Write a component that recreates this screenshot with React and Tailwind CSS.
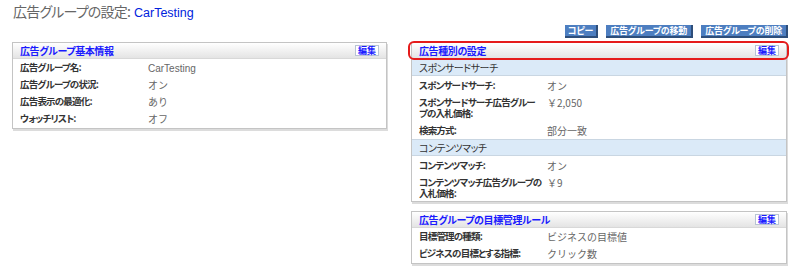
const jp = "font-['Noto_Sans_CJK_JP','Liberation_Sans',sans-serif] [font-feature-settings:'palt']";

function EditBtn() {
  return (
    <span className="inline-flex items-center justify-center h-[11px] px-[2px] bg-white border border-[#b8c4d4] text-[9px] leading-[9px] font-bold text-[#1a1aff]">
      編集
    </span>
  );
}

function Header({ title }) {
  return (
    <div className="flex items-center justify-between h-[16px] pl-[7px] pr-[7px] bg-gradient-to-b from-white to-[#e4e4e4] border-b border-[#d8d8d8]">
      <span className="text-[10px] leading-[12px] font-bold text-[#1a1aff] tracking-[-0.4px]">{title}</span>
      <EditBtn />
    </div>
  );
}

function Row({ label, value, h = "h-[17px]" }) {
  return (
    <div className={"flex pt-[3px] text-[10px] leading-[11px] overflow-visible " + h}>
      <div className="w-[135px] shrink-0 pl-[7px] font-bold text-[#333] whitespace-nowrap text-[9.5px] tracking-[-0.8px]">{label}</div>
      <div className="text-[#666] whitespace-nowrap [font-feature-settings:normal]">{value}</div>
    </div>
  );
}

function Sub({ title }) {
  return (
    <div className="h-[17px] flex items-center pl-[7px] bg-[#dbeaf8] border-y border-[#c9d6e2] text-[10px] text-[#333] tracking-[-0.5px]">
      {title}
    </div>
  );
}

function Panel({ children, className = "" }) {
  return (
    <div className={"relative bg-white border border-[#c4c4c4] shadow-[1px_2px_0_#dcdcdc] " + className}>
      {children}
    </div>
  );
}

function Btn({ children, px = "px-[4px]" }) {
  return (
    <span className={"inline-flex items-center h-[13px] bg-[#4d7ec0] border-r-2 border-b-2 border-[#2e4e7a] text-white text-[9px] leading-[9px] font-bold tracking-[-0.2px] " + px}>
      {children}
    </span>
  );
}

export default function App() {
  return (
    <div className={"w-[800px] h-[268px] bg-white overflow-hidden " + jp}>
      <div className="h-[25px] pl-[13px] pt-[2px] flex items-baseline">
        <span className="text-[14px] leading-[18px] text-[#666] tracking-[-0.8px]">広告グループの設定:</span>
        <span className="ml-[4px] text-[12.5px] text-[#0022dd] font-['Liberation_Sans',sans-serif]">CarTesting</span>
      </div>
      <div className="flex">
        <div className="ml-[12px] w-[375px] pt-[17px]">
          <Panel>
            <Header title="広告グループ基本情報" />
            <div className="pb-[1px]">
              <Row label="広告グループ名:" value={<span className="font-['Liberation_Sans',sans-serif]">CarTesting</span>} />
              <Row label="広告グループの状況:" value="オン" />
              <Row label="広告表示の最適化:" value="あり" />
              <Row label="ウォッチリスト:" value="オフ" />
            </div>
          </Panel>
        </div>
        <div className="ml-[24px] w-[376px]">
          <div className="flex justify-end gap-[8px] mr-[-1px]">
            <Btn px="px-[3px]">コピー</Btn>
            <Btn>広告グループの移動</Btn>
            <Btn>広告グループの削除</Btn>
          </div>
          <Panel className="mt-[4px]">
            <Header title="広告種別の設定" />
            <div className="absolute left-[-4px] right-[-3px] top-[-2px] h-[19px] border-2 border-[#e51b1b] rounded-[6px] pointer-events-none" />
            <Sub title="スポンサードサーチ" />
            <div className="pt-[1px]">
              <Row label="スポンサードサーチ:" value="オン" />
              <Row label={<>スポンサードサーチ広告グルー<br />プの入札価格:</>} value="￥2,050" h="h-[28px]" />
              <Row label="検索方式:" value="部分一致" />
            </div>
            <Sub title="コンテンツマッチ" />
            <div className="pt-[1px]">
              <Row label="コンテンツマッチ:" value="オン" />
              <Row label={<>コンテンツマッチ広告グループの<br />入札価格:</>} value="￥9" h="h-[27px]" />
            </div>
          </Panel>
          <Panel className="mt-[9px]">
            <Header title="広告グループの目標管理ルール" />
            <div className="pb-[1px]">
              <Row label="目標管理の種類:" value="ビジネスの目標値" />
              <Row label="ビジネスの目標とする指標:" value="クリック数" />
            </div>
          </Panel>
        </div>
      </div>
    </div>
  );
}
